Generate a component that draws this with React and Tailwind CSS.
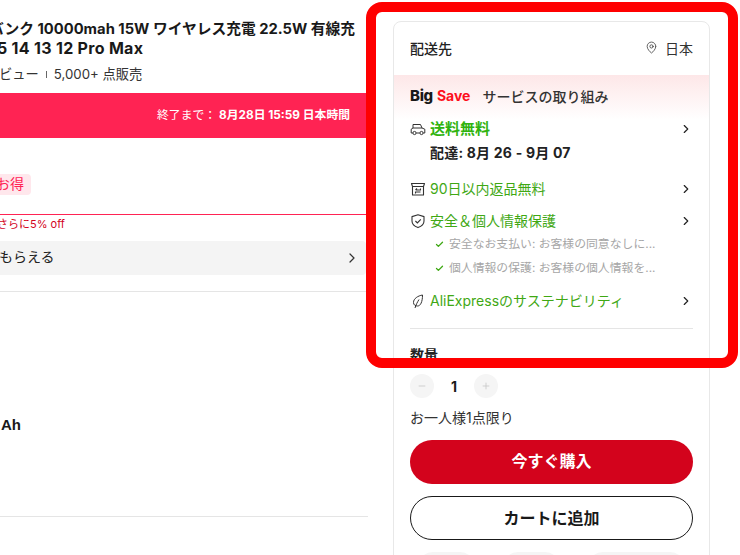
import React from "react";
import { ChevronRight, MapPin, Check, Minus, Plus } from "lucide-react";

const font = "font-['Inter','Noto_Sans_CJK_JP',sans-serif]";

function TruckIcon() {
  return (
    <svg width="16" height="16" viewBox="0 0 16 16" fill="none" stroke="#333" strokeWidth="1">
      <path d="M2.8 12H1.2V8.2L3 7V3.5H10.5L12 7L14.8 8.2V12H13.2M9.8 12H6.2M3 7H12" strokeLinejoin="round" />
      <circle cx="4.5" cy="12" r="1.6" />
      <circle cx="11.5" cy="12" r="1.6" />
    </svg>
  );
}

function BoxIcon() {
  return (
    <svg width="16" height="16" viewBox="0 0 16 16" fill="none" stroke="#333" strokeWidth="1.1">
      <path d="M1.5 2.5H14.5L13.5 5.5V14H2.5V5.5L1.5 2.5Z M2.5 5.5H13.5" strokeLinejoin="round" />
      <path d="M5.5 9H10.5V7.5M10.5 11H5.5V12.5M5.5 9L7 7.5" />
    </svg>
  );
}

function ShieldIcon() {
  return (
    <svg width="16" height="16" viewBox="0 0 16 16" fill="none" stroke="#333" strokeWidth="1.1">
      <path d="M8 1.8L14 3.6V8C14 11.2 11.5 13.4 8 14.6C4.5 13.4 2 11.2 2 8V3.6Z" strokeLinejoin="round" />
      <path d="M5.4 8L7.4 10L10.8 6.4" />
    </svg>
  );
}

function LeafIcon() {
  return (
    <svg width="16" height="16" viewBox="0 0 16 16" fill="none" stroke="#333" strokeWidth="1">
      <path d="M12.5 2C8 2.8 3.5 5.5 3.5 9.5C3.5 12 5.5 13 7.5 13C10.5 13 12.5 9 12.5 2Z" strokeLinejoin="round" />
      <path d="M9 6.5C7.5 9 6 11.5 5 15" />
    </svg>
  );
}

function Row({ icon, label, bold, className }) {
  return (
    <div className={`flex items-center gap-[4px] ${className}`}>
      <span className="flex w-[16px] shrink-0 justify-center">{icon}</span>
      <span className={`flex-1 leading-[20px] ${bold ? "text-[15px] font-bold text-[#2fb30e]" : "text-[14px] text-[#3fa814]"}`}>{label}</span>
      <ChevronRight size={14} strokeWidth={2} className="text-[#222]" />
    </div>
  );
}

function SubRow({ children, className }) {
  return (
    <div className={`flex items-center gap-[5px] pl-[25px] text-[11.85px] leading-[16px] text-[#a6a6a6] ${className}`}>
      <Check size={9} strokeWidth={3.5} className="shrink-0 text-[#3fa814]" />
      <span>{children}</span>
    </div>
  );
}

export default function App() {
  return (
    <div className={`relative h-[555px] w-[740px] overflow-hidden bg-white text-[#191919] ${font}`}>
      <div className="flex items-start">
        <div className="w-[368px] shrink-0 overflow-hidden">
          <div className="mt-[20px] whitespace-nowrap font-bold leading-[19px]">
            <div className="-ml-[11px] text-[14.75px]">バンク 10000mah 15W ワイヤレス充電 22.5W 有線充</div>
            <div className="-ml-[3px] text-[16px] tracking-[0.3px]">5 14 13 12 Pro Max</div>
          </div>
          <div className="-ml-[1px] mt-[7px] flex items-center whitespace-nowrap text-[13.25px] leading-[18px] text-[#333]">
            <span>ビュー</span>
            <span className="mx-[7px] h-[7px] w-[1px] bg-[#666]"></span>
            <span>5,000+ 点販売</span>
          </div>
          <div className="mt-[10px] flex h-[45px] items-center justify-end bg-[#ff2353] pr-[18px] text-[11.8px] text-white">
            <span>終了まで：</span>
            <span className="ml-[3px] font-bold">8月28日 15:59 日本時間</span>
          </div>
          <div className="mt-[36px] flex h-[21px] w-[31px] items-center justify-end rounded-r-[4px] bg-[#ffe7ec] pb-[3px] pr-[7px] text-[14px] text-[#ff2353]">
            <span className="whitespace-nowrap">お得</span>
          </div>
          <div className="mr-[2px] mt-[19px] h-[1px] bg-[#ff2353]"></div>
          <div className="-ml-[3px] mt-[1px] text-[11px] leading-[16px] text-[#d3031c]">さらに5% off</div>
          <div className="mr-[2px] mt-[9px] flex h-[34px] items-center justify-between rounded-r-[4px] bg-[#f4f4f4] pr-[6px]">
            <span className="-ml-[1px] -mt-[3px] text-[14px] text-[#222]">もらえる</span>
            <ChevronRight size={16} strokeWidth={1.8} className="text-[#333]" />
          </div>
          <div className="mt-[16px] h-[1px] bg-[#e5e5e5]"></div>
          <div className="ml-[1px] mt-[124px] font-['Liberation_Sans',sans-serif] text-[15px] font-bold leading-[18px]">Ah</div>
          <div className="mt-[82px] h-[1px] bg-[#e5e5e5]"></div>
        </div>

        <div className="ml-[25px] mt-[21px] h-[600px] w-[317px] shrink-0 rounded-[8px] border border-[#e8e8e8]">
          <div className="flex h-[53px] items-center justify-between px-[16px] text-[14px]">
            <span className="font-medium text-[#222]">配送先</span>
            <span className="flex items-center gap-[7px] text-[#333]">
              <MapPin size={13} strokeWidth={1.4} className="-mt-[3px]" />
              日本
            </span>
          </div>
          <div className="h-[45px] bg-gradient-to-b from-[#fde7e8] to-white px-[16px] pt-[11px]">
            <div className="flex items-start">
              <span className="text-[15px] font-extrabold leading-[20px] tracking-[-0.3px]">Big</span>
              <span className="ml-[4px] text-[14px] font-bold leading-[20px] text-[#fd0f1c]">Save</span>
              <span className="ml-[12px] mt-[1px] text-[14px] font-medium leading-[20px] text-[#333]">サービスの取り組み</span>
            </div>
          </div>
          <div className="px-[16px]">
            <Row icon={<TruckIcon />} label="送料無料" bold className="mt-[-1px]" />
            <div className="mt-[4px] pl-[20px] text-[14px] font-bold leading-[20px] tracking-[0.2px] text-[#222]">配達: 8月 26 - 9月 07</div>
            <Row icon={<BoxIcon />} label="90日以内返品無料" className="mt-[16px]" />
            <Row icon={<ShieldIcon />} label="安全＆個人情報保護" className="mt-[12px]" />
            <SubRow className="mt-[5px]">安全なお支払い: お客様の同意なしに...</SubRow>
            <SubRow className="mt-[8px]">個人情報の保護: お客様の個人情報を...</SubRow>
            <Row icon={<LeafIcon />} label="AliExpressのサステナビリティ" className="mt-[15px]" />
            <div className="mt-[17px] h-[1px] bg-[#e5e5e5]"></div>
            <div className="mt-[16px] text-[14px] font-bold leading-[20px] text-[#222]">数量</div>
            <div className="mt-[9px] flex items-center">
              <span className="flex h-[24px] w-[24px] items-center justify-center rounded-full bg-[#f5f5f5]">
                <Minus size={10} className="text-[#c8c8c8]" />
              </span>
              <span className="w-[40px] text-center text-[14px] font-bold">1</span>
              <span className="flex h-[24px] w-[24px] items-center justify-center rounded-full bg-[#f5f5f5]">
                <Plus size={10} className="text-[#c8c8c8]" />
              </span>
            </div>
            <div className="mt-[10px] text-[14px] leading-[20px] text-[#333]">お一人様1点限り</div>
            <div className="mt-[12px] flex h-[44px] items-center justify-center rounded-full bg-[#d3031c] pb-[2px] text-[16px] font-bold text-white">今すぐ購入</div>
            <div className="mt-[12px] flex h-[44px] items-center justify-center rounded-full border border-[#191919] text-[16px] font-bold">カートに追加</div>
            <div className="mt-[12px] flex pl-[8px]">
              <div className="h-[30px] w-[57px] rounded-full bg-[#f5f5f5]"></div>
              <div className="ml-[28px] h-[30px] w-[57px] rounded-full bg-[#f5f5f5]"></div>
              <div className="ml-[28px] h-[30px] w-[97px] rounded-full bg-[#f5f5f5]"></div>
            </div>
          </div>
        </div>
      </div>

      <div className="pointer-events-none absolute left-[366px] top-[2px] h-[366px] w-[372px] rounded-[16px] border-[10px] border-[#ff0000]"></div>
    </div>
  );
}
